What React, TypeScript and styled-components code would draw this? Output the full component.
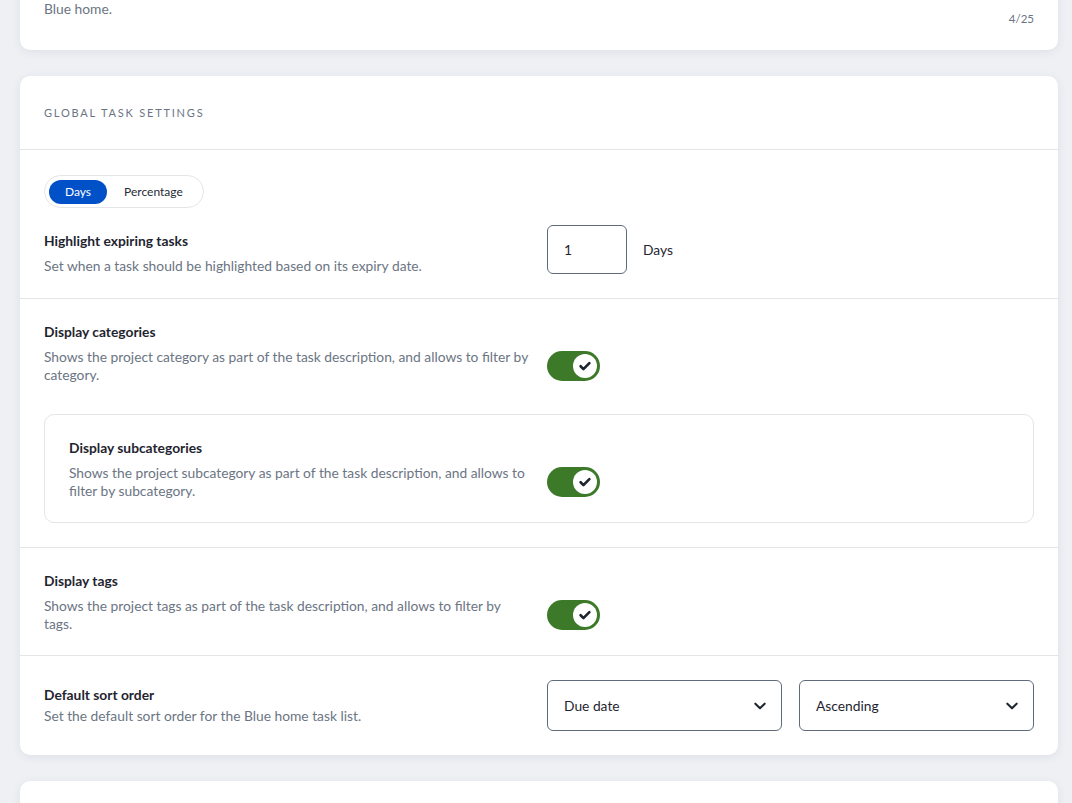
import React from "react";
import styled, { createGlobalStyle } from "styled-components";

const GlobalStyle = createGlobalStyle`
    html, body {
        margin: 0;
        padding: 0;
        background: #eef0f4;
        font-family: Lato, "Noto Sans", sans-serif;
        overflow: hidden;
    }
    * { box-sizing: border-box; }
`

const Page = styled.main`
    width: 1072px;
    padding: 0 14px 0 20px;
    display: flex;
    flex-direction: column;
    gap: 26px;
`

const Card = styled.section<{ $clipTop?: boolean }>`
    width: 1038px;
    background: #ffffff;
    border-radius: 10px;
    box-shadow: 0 2px 10px rgba(40, 50, 80, 0.08);
    margin-top: ${p => (p.$clipTop ? "-43px" : "0")};
`

const NameCard = styled.div`
    padding: 22px 24px 24px 24px;
    display: grid;
    grid-template-columns: 487px 487px;
    column-gap: 16px;
`

const NameDesc = styled.p`
    margin: 0;
    padding-top: 3px;
    font-size: 13.8px;
    line-height: 18px;
    color: #6b7583;
`

const NameValue = styled.div`
    display: flex;
    flex-direction: column;
    align-items: stretch;
    margin-top: -2px;
`

const CutText = styled.div`
    font-size: 26px;
    line-height: 26px;
    height: 26px;
    color: #5f6b7a;
    letter-spacing: 3px;
    white-space: nowrap;
    overflow: hidden;
`

const Counter = styled.span`
    align-self: flex-end;
    margin-top: 9px;
    font-size: 11.5px;
    line-height: 14px;
    color: #6b7583;
`

const Header = styled.h2`
    margin: 0;
    padding: 29px 24px;
    font-size: 11px;
    line-height: 15px;
    font-weight: 400;
    letter-spacing: 1.8px;
    color: #6b7583;
    border-bottom: 1px solid #e3e5e9;
`

const Section = styled.div<{ $pb?: number; $last?: boolean }>`
    padding: 24px 24px ${p => p.$pb ?? 24}px 24px;
    border-bottom: ${p => (p.$last ? "none" : "1px solid #e3e5e9")};
    display: flex;
    flex-direction: column;
`

const Segmented = styled.div`
    align-self: flex-start;
    display: flex;
    align-items: center;
    height: 33px;
    margin-top: 1px;
    padding: 0 3px 0 4px;
    border: 1px solid #e3e5e9;
    border-radius: 17px;
    margin-bottom: 17px;
`

const Segment = styled.button<{ $active?: boolean }>`
    border: none;
    height: 24px;
    padding: 0 ${p => (p.$active ? "16px" : "17px")};
    border-radius: 12px;
    font-family: inherit;
    font-size: 12px;
    background: ${p => (p.$active ? "#0050c8" : "transparent")};
    color: ${p => (p.$active ? "#ffffff" : "#1f2937")};
    cursor: pointer;
`

const Row = styled.div<{ $left: number; $align?: string }>`
    display: grid;
    grid-template-columns: ${p => p.$left}px 1fr;
    column-gap: 16px;
    align-items: ${p => p.$align ?? "center"};
`

const TextBlock = styled.div<{ $offset?: number }>`
    display: flex;
    flex-direction: column;
    padding-top: ${p => p.$offset ?? 0}px;
`

const Title = styled.h3`
    margin: 0;
    font-size: 13.8px;
    line-height: 18px;
    font-weight: 700;
    color: #1f2530;
`

const Desc = styled.p<{ $gap?: number }>`
    margin: ${p => p.$gap ?? 3}px 0 0 0;
    font-size: 13.8px;
    line-height: 18px;
    color: #6b7583;
`

const NumberField = styled.div`
    display: flex;
    align-items: center;
    gap: 16px;
`

const NumberInput = styled.input`
    width: 80px;
    height: 49px;
    padding: 0 16px;
    border: 1px solid #5f6b7a;
    border-radius: 6px;
    font-family: inherit;
    font-size: 13.8px;
    color: #1f2530;
    outline: none;
`

const Unit = styled.span`
    font-size: 13.8px;
    color: #1f2530;
`

const ToggleTrack = styled.button<{ $on: boolean }>`
    width: 53px;
    height: 30px;
    padding: 3px;
    border: none;
    border-radius: 15px;
    background: ${p => (p.$on ? "#3c7a2a" : "#c8ccd3")};
    display: flex;
    justify-content: ${p => (p.$on ? "flex-end" : "flex-start")};
    align-items: center;
    cursor: pointer;
`

const Knob = styled.span`
    width: 24px;
    height: 24px;
    border-radius: 50%;
    background: #ffffff;
    display: flex;
    align-items: center;
    justify-content: center;
`

const ToggleCell = styled.div`
    padding-top: 7px;
    display: flex;
    align-items: center;
`

const SubCard = styled.div`
    margin-top: 30px;
    border: 1px solid #e3e5e9;
    border-radius: 10px;
    padding: 24px 24px 22px 24px;
    display: flex;
    flex-direction: column;
`

const Selects = styled.div`
    display: grid;
    grid-template-columns: 1fr 1fr;
    column-gap: 17px;
`

const SelectBox = styled.div`
    height: 51px;
    padding: 0 14px 0 16px;
    border: 1px solid #5f6b7a;
    border-radius: 6px;
    display: flex;
    align-items: center;
    justify-content: space-between;
    font-size: 13.8px;
    color: #1f2530;
`

const Check = () => (
    <svg width="14" height="14" viewBox="0 0 24 24" fill="none">
        <path d="M4.5 12.5l4.8 4.8L19.5 7" stroke="#1f2530" strokeWidth="4.6" strokeLinecap="round" strokeLinejoin="round" />
    </svg>
)

const Chevron = () => (
    <svg width="14" height="14" viewBox="0 0 24 24" fill="none">
        <path d="M4 8l8 8 8-8" stroke="#1f2530" strokeWidth="3.5" strokeLinecap="round" strokeLinejoin="round" />
    </svg>
)

const Toggle: React.FC<{ on: boolean }> = ({ on }) => (
    <ToggleTrack $on={on} aria-pressed={on}>
        <Knob>{on && <Check />}</Knob>
    </ToggleTrack>
)

interface ToggleSetting {
    title: string;
    desc: string;
}

const ToggleRow: React.FC<{ setting: ToggleSetting; left: number }> = ({ setting, left }) => (
    <>
        <Title>{setting.title}</Title>
        <Row $left={left}>
            <Desc $gap={7}>{setting.desc}</Desc>
            <ToggleCell>
                <Toggle on />
            </ToggleCell>
        </Row>
    </>
)

const categories: ToggleSetting = {
    title: "Display categories",
    desc: "Shows the project category as part of the task description, and allows to filter by category.",
}

const subcategories: ToggleSetting = {
    title: "Display subcategories",
    desc: "Shows the project subcategory as part of the task description, and allows to filter by subcategory.",
}

const tags: ToggleSetting = {
    title: "Display tags",
    desc: "Shows the project tags as part of the task description, and allows to filter by tags.",
}

const App: React.FC = () => {
    return (
        <>
            <GlobalStyle />
            <Page>
                <Card $clipTop>
                    <NameCard>
                        <NameDesc>
                            Set the name of the task list shown in the
                            <br />
                            Blue home.
                        </NameDesc>
                        <NameValue>
                            <CutText>LIST TITLE HIDDEN ZONE ELL</CutText>
                            <Counter>4/25</Counter>
                        </NameValue>
                    </NameCard>
                </Card>

                <Card>
                    <Header>GLOBAL TASK SETTINGS</Header>

                    <Section $pb={23}>
                        <Segmented>
                            <Segment $active>Days</Segment>
                            <Segment>Percentage</Segment>
                        </Segmented>
                        <Row $left={487} $align="start">
                            <TextBlock $offset={7}>
                                <Title>Highlight expiring tasks</Title>
                                <Desc $gap={7}>Set when a task should be highlighted based on its expiry date.</Desc>
                            </TextBlock>
                            <NumberField>
                                <NumberInput defaultValue="1" />
                                <Unit>Days</Unit>
                            </NumberField>
                        </Row>
                    </Section>

                    <Section>
                        <ToggleRow setting={categories} left={487} />
                        <SubCard>
                            <ToggleRow setting={subcategories} left={462} />
                        </SubCard>
                    </Section>

                    <Section $pb={22}>
                        <ToggleRow setting={tags} left={487} />
                    </Section>

                    <Section $last>
                        <Row $left={487}>
                            <TextBlock>
                                <Title>Default sort order</Title>
                                <Desc $gap={3}>Set the default sort order for the Blue home task list.</Desc>
                            </TextBlock>
                            <Selects>
                                <SelectBox>
                                    Due date
                                    <Chevron />
                                </SelectBox>
                                <SelectBox>
                                    Ascending
                                    <Chevron />
                                </SelectBox>
                            </Selects>
                        </Row>
                    </Section>
                </Card>

                <Card style={{ height: 200 }} />
            </Page>
        </>
    )
}

export default App;
